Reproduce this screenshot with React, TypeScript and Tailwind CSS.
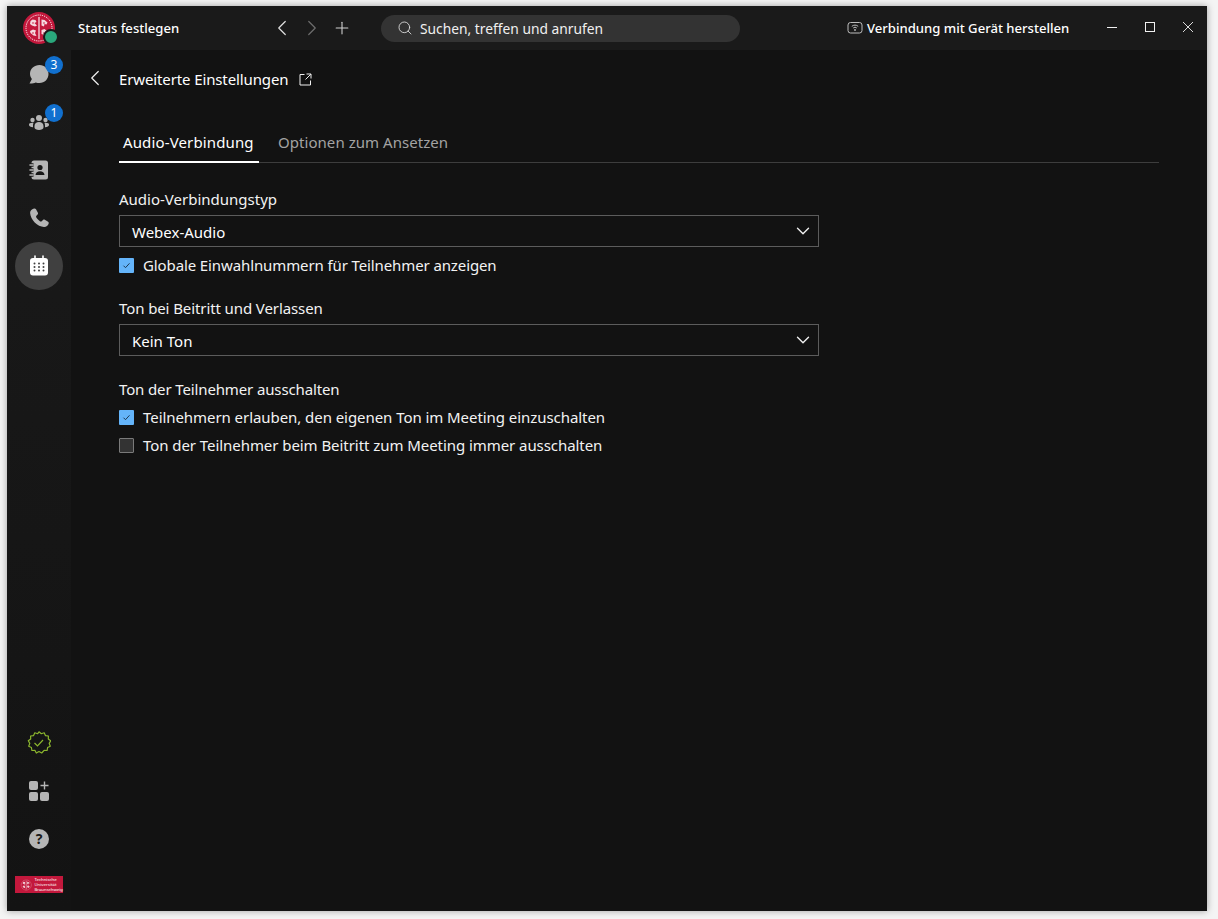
import { ChevronDown, ChevronLeft, ChevronRight, Plus, Search } from "lucide-react";

const Badge = ({ n }: { n: number }) => (
  <span className="absolute left-[18px] top-[-6px] flex h-[18px] w-[18px] items-center justify-center rounded-full bg-[#1170cf] text-[12px] leading-none text-white">
    {n}
  </span>
);

const Seal = ({ size, bg }: { size: number; bg: string }) => (
  <svg width={size} height={size} viewBox="0 0 32 32">
    <circle cx="16" cy="16" r="16" fill={bg} />
    <circle cx="16" cy="16" r="13" fill="none" stroke="#fff" strokeWidth="1" strokeDasharray="1.2 1" />
    <path d="M16 5v22" stroke="#fff" strokeWidth="1.100" />
    <g fill="#f4d9df">
      <path d="M7.500 9l2-1.500 3 .5 1 2-2 1 2.500 2.500-2 1-3-1-2-1.500zM18.500 7.500l3 .5 3 2.500-1 2-2-.5-.5 2.500-2.500-1zM7 19l3-1.500 3 1-1 2.500 1.500 3-3-.5-3-2.500zM18.500 18l3-1 3 2.500-1 3-2.500 1.500-1-1.500-1.500-.5z" />
    </g>
    <g fill={bg}>
      <circle cx="10" cy="11" r=".8" /><circle cx="21" cy="11" r=".8" /><circle cx="10" cy="21" r=".8" /><circle cx="21" cy="21" r=".8" />
    </g>
  </svg>
);

const SideItem = ({ children, badge, active }: { children: React.ReactNode; badge?: number; active?: boolean }) => (
  <div className={`relative flex h-12 w-12 items-center justify-center rounded-full ${active ? "bg-[#404040]" : ""}`}>
    <div className="relative h-6 w-6">
      {children}
      {badge ? <Badge n={badge} /> : null}
    </div>
  </div>
);

const Check = ({ checked }: { checked?: boolean }) =>
  checked ? (
    <span className="flex h-[15px] w-[15px] shrink-0 items-center justify-center rounded-[1px] bg-[#64b4fa]">
      <svg width="11" height="11" viewBox="0 0 11 11" fill="none">
        <path d="M2.500 5.700l2 2 4-4.400" stroke="#1c3a55" strokeWidth="1" />
      </svg>
    </span>
  ) : (
    <span className="h-[15px] w-[15px] shrink-0 rounded-[1px] border border-[#7a7a7a] bg-[#333333]" />
  );

const Select = ({ value }: { value: string }) => (
  <div className="flex h-[32px] w-[700px] items-center justify-between border border-[#5c5c5c] pl-3 pr-[4px] text-white">
    <span className="translate-y-[1px]">{value}</span>
    <ChevronDown size={22} strokeWidth={1.500} className="text-[#f0f0f0]" />
  </div>
);

const CheckRow = ({ checked, label, tracking }: { checked?: boolean; label: string; tracking: string }) => (
  <div className="flex h-[28px] items-center gap-[9px] text-[#f2f2f2]">
    <Check checked={checked} />
    <span className={tracking}>{label}</span>
  </div>
);

export default function App() {
  return (
    <div
      className="h-[919px] w-[1218px] overflow-hidden bg-[#f4f4f4] pl-[7px] pt-[6px] text-[15px] leading-5"
      style={{ fontFamily: '"Noto Sans", "Open Sans", sans-serif' }}
    >
      <div className="flex h-[905px] w-[1200px] flex-col bg-[#121212] shadow-[0_0_7px_rgba(0,0,0,0.35)]">
        {/* Title bar */}
        <div className="flex h-[44px] shrink-0 items-center bg-[#1a1a1a] text-white">
          <div className="relative flex w-[64px] justify-center">
            <Seal size={32} bg="#c3183c" />
            <span className="absolute left-[36px] top-[17px] box-content h-[12px] w-[12px] rounded-full border-2 border-[#1a1a1a] bg-[#2aa87c]" />
          </div>
          <span className="ml-[7px] w-[189px] text-[13.100px] font-medium">Status festlegen</span>
          <div className="flex w-[90px] items-center">
            <span className="flex w-[30px] justify-center"><ChevronLeft size={26} strokeWidth={1.100} className="text-[#e0e0e0]" /></span>
            <span className="flex w-[30px] justify-center"><ChevronRight size={26} strokeWidth={1.100} className="text-[#6e6e6e]" /></span>
            <span className="flex w-[30px] justify-center"><Plus size={20} strokeWidth={1.300} className="text-[#d0d0d0]" /></span>
          </div>
          <div className="ml-[24px] flex h-[27px] w-[359px] items-center rounded-full bg-[#333333] pl-[16px] text-[13.800px] text-[#f0f0f0]">
            <Search size={16} strokeWidth={1.300} className="text-[#e0e0e0]" />
            <span className="ml-[7px] translate-y-[1px]">Suchen, treffen und anrufen</span>
          </div>
          <div className="ml-[107px] flex items-center gap-[4px] text-[13.100px] font-medium">
            <svg width="16" height="14" viewBox="0 0 16 14" fill="none">
              <rect x="1" y="1.500" width="14" height="10.500" rx="2.500" stroke="#bdbdbd" />
              <path d="M4.800 5.400a4.600 4.600 0 0 1 6.400 0M6.200 7a2.600 2.600 0 0 1 3.600 0" stroke="#bdbdbd" strokeWidth="1" />
              <circle cx="8" cy="9" r="0.900" fill="#bdbdbd" />
            </svg>
            <span>Verbindung mit Gerät herstellen</span>
          </div>
          <div className="ml-auto flex -translate-y-px items-center text-[#f0f0f0]">
            <span className="flex w-[38px] justify-center">
              <svg width="10" height="10" viewBox="0 0 10 10" fill="none"><path d="M0 5.500h10" stroke="currentColor" /></svg>
            </span>
            <span className="flex w-[38px] justify-center">
              <svg width="10" height="10" viewBox="0 0 10 10" fill="none"><rect x="0.500" y="0.500" width="9" height="9" stroke="currentColor" /></svg>
            </span>
            <span className="flex w-[38px] justify-center">
              <svg width="10" height="10" viewBox="0 0 10 10" fill="none"><path d="M0 0l10 10M10 0L0 10" stroke="currentColor" strokeWidth="0.900" /></svg>
            </span>
          </div>
        </div>

        <div className="flex min-h-0 flex-1">
          {/* Left rail */}
          <div className="flex w-[64px] shrink-0 flex-col items-center bg-linear-to-b from-[#1a1a1a] to-[#131313] pb-[2px]">
            <SideItem badge={3}>
              <svg width="24" height="24" viewBox="0 0 24 24">
                <path d="M12.500 3C7.300 3 3 6.900 3 11.800c0 2 .7 3.800 1.900 5.300L2.500 21.500c2.500.2 4.600-.4 6.200-1.100 1.200.4 2.500.6 3.800.6 5.200 0 9-3.900 9-9S17.700 3 12.500 3z" fill="#b5b5b5" />
              </svg>
            </SideItem>
            <SideItem badge={1}>
              <svg width="24" height="24" viewBox="0 0 24 24" fill="#b5b5b5">
                <circle cx="12" cy="8" r="3" />
                <circle cx="5.500" cy="10" r="2.200" />
                <circle cx="18.500" cy="10" r="2.200" />
                <path d="M7.500 16c0-2.500 2-4 4.500-4s4.500 1.500 4.500 4v1.500c0 1.500-2 2.500-4.500 2.500s-4.500-1-4.500-2.500zM2 14.500c0-1 1-1.800 3.500-1.800.5 0 .8 0 1.100.1-.5.900-.6 1.800-.6 3.200v1.200C3.500 17 2 16 2 15zM22 14.500c0-1-1-1.800-3.500-1.800-.5 0-.8 0-1.100.1.500.9.600 1.800.6 3.200v1.200c2.500-.2 4-1.200 4-2.200z" />
              </svg>
            </SideItem>
            <SideItem>
              <svg width="24" height="24" viewBox="0 0 24 24">
                <path d="M7 2.500h11.500A2.500 2.500 0 0 1 21 5v14a2.500 2.500 0 0 1-2.500 2.500H7A2.500 2.500 0 0 1 4.500 19V5A2.500 2.500 0 0 1 7 2.500z" fill="#b5b5b5" />
                <path d="M2.500 7h4M2.500 12h4M2.500 17h4" stroke="#171717" strokeWidth="3.400" />
                <path d="M3 7h3M3 12h3M3 17h3" stroke="#b5b5b5" strokeWidth="1.600" strokeLinecap="round" />
                <circle cx="13" cy="9.500" r="2.600" fill="#171717" />
                <path d="M8.500 17c0-2.500 2-3.800 4.500-3.800s4.500 1.300 4.500 3.800z" fill="#171717" />
              </svg>
            </SideItem>
            <SideItem>
              <svg width="24" height="24" viewBox="0 0 24 24">
                <path d="M7 2.500c-2.500.7-4 2.500-3.900 4.500.3 3.500 2 6.800 4.600 9.500 2.700 2.600 6 4.300 9.300 4.500 2.200.1 4-1.200 4.700-3.500.2-.7 0-1.300-.6-1.700l-3.300-2c-.6-.4-1.300-.3-1.800.2l-1.300 1.300c-.4.400-1 .4-1.500.1-1.500-1-3-2.600-4-4.200-.3-.5-.2-1 .2-1.400l1.200-1.200c.5-.5.600-1.200.3-1.800L9 3.300c-.4-.7-1.200-1-2-.8z" fill="#b5b5b5" />
              </svg>
            </SideItem>
            <SideItem active>
              <svg width="24" height="24" viewBox="0 0 24 24">
                <rect x="3" y="4" width="18" height="17.500" rx="3" fill="#fff" />
                <path d="M8 2v4M16 2v4" stroke="#fff" strokeWidth="1.600" strokeLinecap="round" />
                <g fill="#404040">
                  <circle cx="7.500" cy="9.500" r="1" /><circle cx="12" cy="9.500" r="1" /><circle cx="16.500" cy="9.500" r="1" />
                  <circle cx="7.500" cy="13" r="1" /><circle cx="12" cy="13" r="1" /><circle cx="16.500" cy="13" r="1" />
                  <circle cx="7.500" cy="16.500" r="1" /><circle cx="12" cy="16.500" r="1" /><circle cx="16.500" cy="16.500" r="1" />
                </g>
              </svg>
            </SideItem>

            <div className="mt-auto flex flex-col items-center">
              <SideItem>
                <svg width="24" height="24" viewBox="0 0 24 24" fill="none">
                  <path d="M12 .8l2.300 1.900 2.900-.9 1.200 2.800 3 .4-.1 3 2.400 1.800-1.500 2.600 1.100 2.800-2.700 1.300-.5 3-3-.2L14.700 22 12 20.500 9.300 22l-1.400-2.700-3 .2-.5-3-2.700-1.300 1.100-2.800L1.300 9.800l2.400-1.800-.1-3 3-.4L7.800 1.800l2.900.9z" stroke="#8cb62e" strokeWidth="1.200" strokeLinejoin="round" />
                  <path d="M7.500 12l3 3 5.500-6" stroke="#8cb62e" strokeWidth="1.200" />
                </svg>
              </SideItem>
              <SideItem>
                <svg width="24" height="24" viewBox="0 0 24 24" fill="#b5b5b5">
                  <rect x="2" y="2" width="9" height="9" rx="2" />
                  <rect x="2" y="13" width="9" height="9" rx="2" />
                  <rect x="13" y="13" width="9" height="9" rx="2" />
                  <path d="M17.500 2.500v8M13.500 6.500h8" stroke="#b5b5b5" strokeWidth="1.400" />
                </svg>
              </SideItem>
              <SideItem>
                <div className="flex h-[20px] w-[20px] translate-x-[2px] translate-y-[2px] items-center justify-center rounded-full bg-[#b5b5b5] text-[14px] font-bold leading-none text-[#1a1a1a]">
                  ?
                </div>
              </SideItem>
              <div className="mt-[13px] flex h-[17px] w-[48px] items-center gap-[2px] bg-[#c3183c] pl-[5px] text-white">
                <Seal size={14} bg="#c3183c" />
                <span className="whitespace-nowrap text-[4.300px] leading-[5px]">Technische<br />Universität<br />Braunschweig</span>
              </div>
              <div className="h-[16px]" />
            </div>
          </div>

          {/* Content */}
          <div className="flex-1 bg-[#121212] pr-[48px]">
            <div className="flex h-[60px] items-center pb-[2px] text-white">
              <span className="flex w-[48px] justify-center">
                <ChevronLeft size={26} strokeWidth={1.100} className="mt-[-2px] text-[#f0f0f0]" />
              </span>
              <span className="tracking-[-0.12px]">Erweiterte Einstellungen</span>
              <svg className="ml-[11px]" width="13" height="13" viewBox="0 0 13 13" fill="none">
                <path d="M5.500 1.500H1v10.500h10.500V7.500M7.500 1h4.500v4.500M12 1L6.500 6.500" stroke="#f0f0f0" strokeWidth="1" />
              </svg>
            </div>

            <div className="ml-[48px] mt-[22px]">
              <div className="flex h-[31px] border-b border-[#3d3d3d] text-[15px]">
                <div className="h-[31px] w-[140px] border-b-2 border-white px-[4px] tracking-[0.13px] text-white">Audio-Verbindung</div>
                <div className="ml-[15px] px-[4px] tracking-[0.05px] text-[#a3a3a3]">Optionen zum Ansetzen</div>
              </div>

              <div className="mt-[26px] text-[#f2f2f2]">Audio-Verbindungstyp</div>
              <div className="mt-[6px]"><Select value="Webex-Audio" /></div>
              <div className="mt-[4px]">
                <CheckRow checked tracking="tracking-[-0.11px]" label="Globale Einwahlnummern für Teilnehmer anzeigen" />
              </div>

              <div className="mt-[19px] tracking-[-0.1px] text-[#f2f2f2]">Ton bei Beitritt und Verlassen</div>
              <div className="mt-[6px]"><Select value="Kein Ton" /></div>

              <div className="mt-[23px] tracking-[-0.13px] text-[#f2f2f2]">Ton der Teilnehmer ausschalten</div>
              <div className="mt-[4px]">
                <CheckRow checked tracking="tracking-[-0.06px]" label="Teilnehmern erlauben, den eigenen Ton im Meeting einzuschalten" />
                <CheckRow tracking="tracking-[-0.06px]" label="Ton der Teilnehmer beim Beitritt zum Meeting immer ausschalten" />
              </div>
            </div>
          </div>
        </div>
      </div>
    </div>
  );
}
